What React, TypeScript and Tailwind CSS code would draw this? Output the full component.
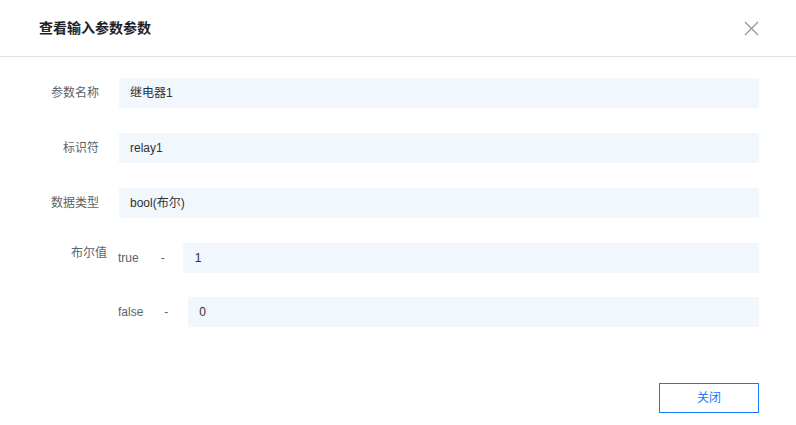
export default function App() {
  const font = { fontFamily: '"Liberation Sans", "Noto Sans CJK SC", sans-serif' }

  const rows = [
    { label: "参数名称", value: "继电器1" },
    { label: "标识符", value: "relay1" },
    { label: "数据类型", value: "bool(布尔)" },
  ]

  return (
    <div className="w-[796px] h-[425px] bg-white flex flex-col" style={font}>
      {/* header */}
      <div className="h-[57px] flex items-center justify-between pl-[39px] pr-[37px] border-b border-[#dcdfe6]">
        <h2 className="text-[14px] font-bold text-[#1f2329]">查看输入参数参数</h2>
        <svg width="15" height="15" viewBox="0 0 15 15" className="text-[#909399]">
          <path d="M1 1L14 14M14 1L1 14" stroke="currentColor" strokeWidth="1.2" fill="none" />
        </svg>
      </div>

      {/* body */}
      <div className="flex flex-col pt-[21px] pr-[37px] gap-[25px]">
        {rows.map((row) => (
          <div key={row.label} className="flex items-center">
            <span className="w-[99px] text-right text-[12px] text-[#606266]">{row.label}</span>
            <div className="ml-[20px] flex-1 h-[30px] bg-[#f2f6fd] flex items-center pl-[11px] text-[12px] text-[#303133]">
              {row.value}
            </div>
          </div>
        ))}

        <div className="flex items-start">
          <span className="w-[107px] text-right text-[12px] leading-[20px] text-[#606266]">布尔值</span>
          <div className="ml-[11px] flex-1 flex flex-col gap-[24px]">
            <div className="flex items-center text-[12px] text-[#606266]">
              <span>true</span>
              <span className="ml-[22px]">-</span>
              <div className="ml-[18px] flex-1 h-[30px] bg-[#f2f6fd] flex items-center pl-[12px] text-[#303133]">1</div>
            </div>
            <div className="flex items-center text-[12px] text-[#606266]">
              <span>false</span>
              <span className="ml-[21px]">-</span>
              <div className="ml-[20px] flex-1 h-[30px] bg-[#f2f6fd] flex items-center pl-[11px] text-[#303133]">0</div>
            </div>
          </div>
        </div>
      </div>

      {/* footer */}
      <div className="flex justify-end pr-[37px] mt-[56px]">
        <button className="w-[100px] h-[30px] border border-[#1677ff] text-[#1677ff] text-[12px] bg-white">
          关闭
        </button>
      </div>
    </div>
  )
}
